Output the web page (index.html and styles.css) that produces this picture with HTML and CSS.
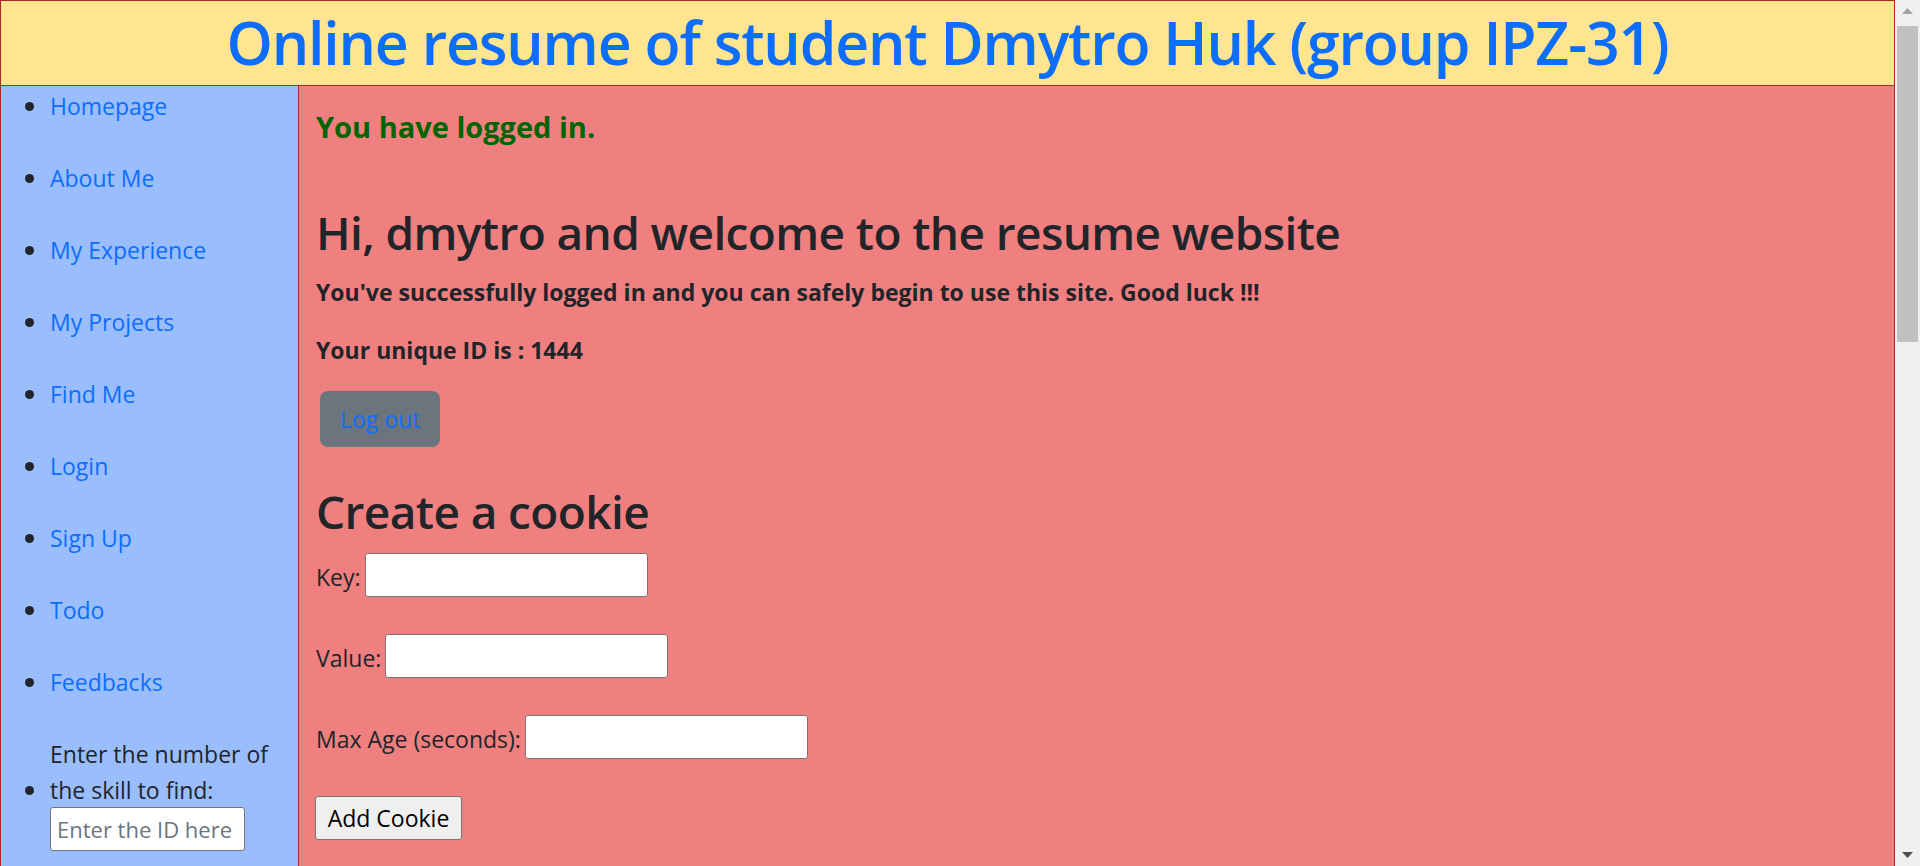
FILE: index.html
```html
<!DOCTYPE html>
<html lang="en">
<head>
<meta charset="utf-8">
<title>Online resume of student Dmytro Huk</title>
<link rel="stylesheet" href="styles.css">
</head>
<body>
<div class="viewport">
  <div class="page">
    <header class="site-header">
      <h1 class="site-title">Online resume of student Dmytro Huk (group IPZ-31)</h1>
    </header>
    <div class="layout">
      <nav class="sidebar">
        <ul class="nav-list">
          <li><a href="#">Homepage</a></li>
          <li><a href="#">About Me</a></li>
          <li><a href="#">My Experience</a></li>
          <li><a href="#">My Projects</a></li>
          <li><a href="#">Find Me</a></li>
          <li><a href="#">Login</a></li>
          <li><a href="#">Sign Up</a></li>
          <li><a href="#">Todo</a></li>
          <li><a href="#">Feedbacks</a></li>
          <li class="search-item">
            <label class="search-label" for="skill">Enter the number of the skill to find:</label>
            <input id="skill" class="search-input" type="text" placeholder="Enter the ID here">
          </li>
        </ul>
      </nav>
      <main class="content">
        <h4 class="status">You have logged in.</h4>
        <h1 class="heading heading-welcome">Hi, dmytro and welcome to the resume website</h1>
        <h5 class="note note-first">You've successfully logged in and you can safely begin to use this site. Good luck !!!</h5>
        <h5 class="note note-second">Your unique ID is : 1444</h5>
        <button class="logout" type="button">Log out</button>
        <h1 class="heading heading-cookie">Create a cookie</h1>
        <form class="cookie-form">
          <div class="form-row"><label class="form-label" for="key">Key:</label><input id="key" class="field" type="text"></div>
          <div class="form-row"><label class="form-label" for="value">Value:</label><input id="value" class="field" type="text"></div>
          <div class="form-row"><label class="form-label" for="age">Max Age (seconds):</label><input id="age" class="field" type="text"></div>
          <div class="form-row"><button class="add-btn" type="submit">Add Cookie</button></div>
        </form>
      </main>
    </div>
  </div>
  <div class="scrollbar" aria-hidden="true">
    <div class="scroll-arrow">
      <svg width="11" height="6" viewBox="0 0 11 6"><path d="M5.5 0 L11 6 L0 6 Z" fill="#a3a3a3"/></svg>
    </div>
    <div class="scroll-track">
      <div class="scroll-thumb"></div>
    </div>
    <div class="scroll-arrow">
      <svg width="11" height="6" viewBox="0 0 11 6"><path d="M0 0 L11 0 L5.5 6 Z" fill="#505050"/></svg>
    </div>
  </div>
</div>
</body>
</html>
```
FILE: styles.css
```css
* { box-sizing: border-box; }

html, body {
  margin: 0;
  padding: 0;
}

body {
  font-family: "Open Sans", "Noto Sans", sans-serif;
  font-size: 23px;
  line-height: 1.5;
  color: #212529;
  background: #ffffff;
}

.viewport {
  display: flex;
  align-items: flex-start;
}

.page {
  flex: 1;
  min-width: 0;
}

/* browser scrollbar look-alike */
.scrollbar {
  position: sticky;
  top: 0;
  flex: 0 0 25px;
  height: 100vh;
  background: #f0f0f0;
  display: flex;
  flex-direction: column;
}

.scroll-arrow {
  height: 22px;
  display: flex;
  align-items: center;
  justify-content: center;
}

.scroll-arrow svg {
  display: block;
}

.scroll-track {
  flex: 1;
  padding: 4px 2px 0 2px;
}

.scroll-thumb {
  height: 316px;
  background: #c1c1c1;
}

.site-header {
  height: 86px;
  border: 1px solid #a52a2a;
  background: #ffe590;
  display: flex;
  align-items: center;
  justify-content: center;
}

.site-title {
  margin: 0;
  font-size: 59px;
  font-weight: 600;
  letter-spacing: -1.2px;
  line-height: 1.2;
  color: #0d6efd;
  padding-bottom: 2px;
}

.layout {
  display: flex;
  min-height: 2140px;
}

.sidebar {
  width: 299px;
  flex: 0 0 299px;
  background: #99bdfd;
  border: 1px solid #a52a2a;
  border-top: 0;
}

.nav-list {
  margin: 0;
  padding: 2px 0 0 49px;
  font-size: 23px;
  line-height: 36px;
  list-style: none;
}

.nav-list li {
  position: relative;
  margin-bottom: 36px;
}

.nav-list li::before {
  content: "";
  position: absolute;
  left: -25px;
  top: 14px;
  width: 9px;
  height: 9px;
  border-radius: 50%;
  background: #212529;
}

.nav-list .search-item::before {
  top: 50px;
}

.nav-list a {
  color: #0d6efd;
  text-decoration: none;
}

.search-label {
  display: inline-block;
  max-width: 225px;
}

.search-input {
  display: block;
  width: 195px;
  height: 44px;
  margin-top: -1px;
  padding: 0 1px 0 6px;
  font: inherit;
  font-size: 22px;
  border: 1px solid #767676;
  border-radius: 3px;
  background: #ffffff;
}

.search-input::placeholder {
  color: #6c757d;
}

.content {
  flex: 1;
  background: #f08080;
  border: 1px solid #a52a2a;
  border-left: 0;
  border-top: 0;
  padding: 24px 17px 0 17px;
}

.status {
  margin: 0;
  font-size: 29px;
  font-weight: 700;
  line-height: 1.2;
  color: #006400;
}

.heading {
  margin: 0;
  font-size: 46px;
  font-weight: 600;
  letter-spacing: -0.6px;
  line-height: 1.2;
}

.heading-welcome {
  margin-top: 60px;
}

.note {
  margin: 0;
  font-size: 23px;
  font-weight: 700;
  line-height: 1.2;
}

.note-first {
  margin-top: 19px;
}

.note-second {
  margin-top: 30px;
}

.logout {
  display: block;
  margin: 27px 0 0 4px;
  width: 120px;
  height: 56px;
  padding: 0 0 0 20px;
  font: inherit;
  font-size: 23px;
  white-space: nowrap;
  color: #0d6efd;
  background: #6c757d;
  border: 0;
  border-radius: 8px;
  text-align: left;
}

.heading-cookie {
  margin-top: 37px;
}

.cookie-form {
  display: flex;
  flex-direction: column;
  gap: 37px;
  margin-top: 14px;
}

.form-row {
  display: flex;
  align-items: center;
  gap: 4px;
  height: 44px;
}

.form-label {
  padding-top: 3px;
}

.field {
  width: 283px;
  height: 44px;
  font: inherit;
  border: 1px solid #767676;
  border-radius: 3px;
  background: #ffffff;
}

.add-btn {
  height: 44px;
  width: 147px;
  margin-left: -1px;
  font: inherit;
  font-size: 23px;
  color: #000000;
  background: #efefef;
  border: 1px solid #767676;
  border-radius: 3px;
}
```
